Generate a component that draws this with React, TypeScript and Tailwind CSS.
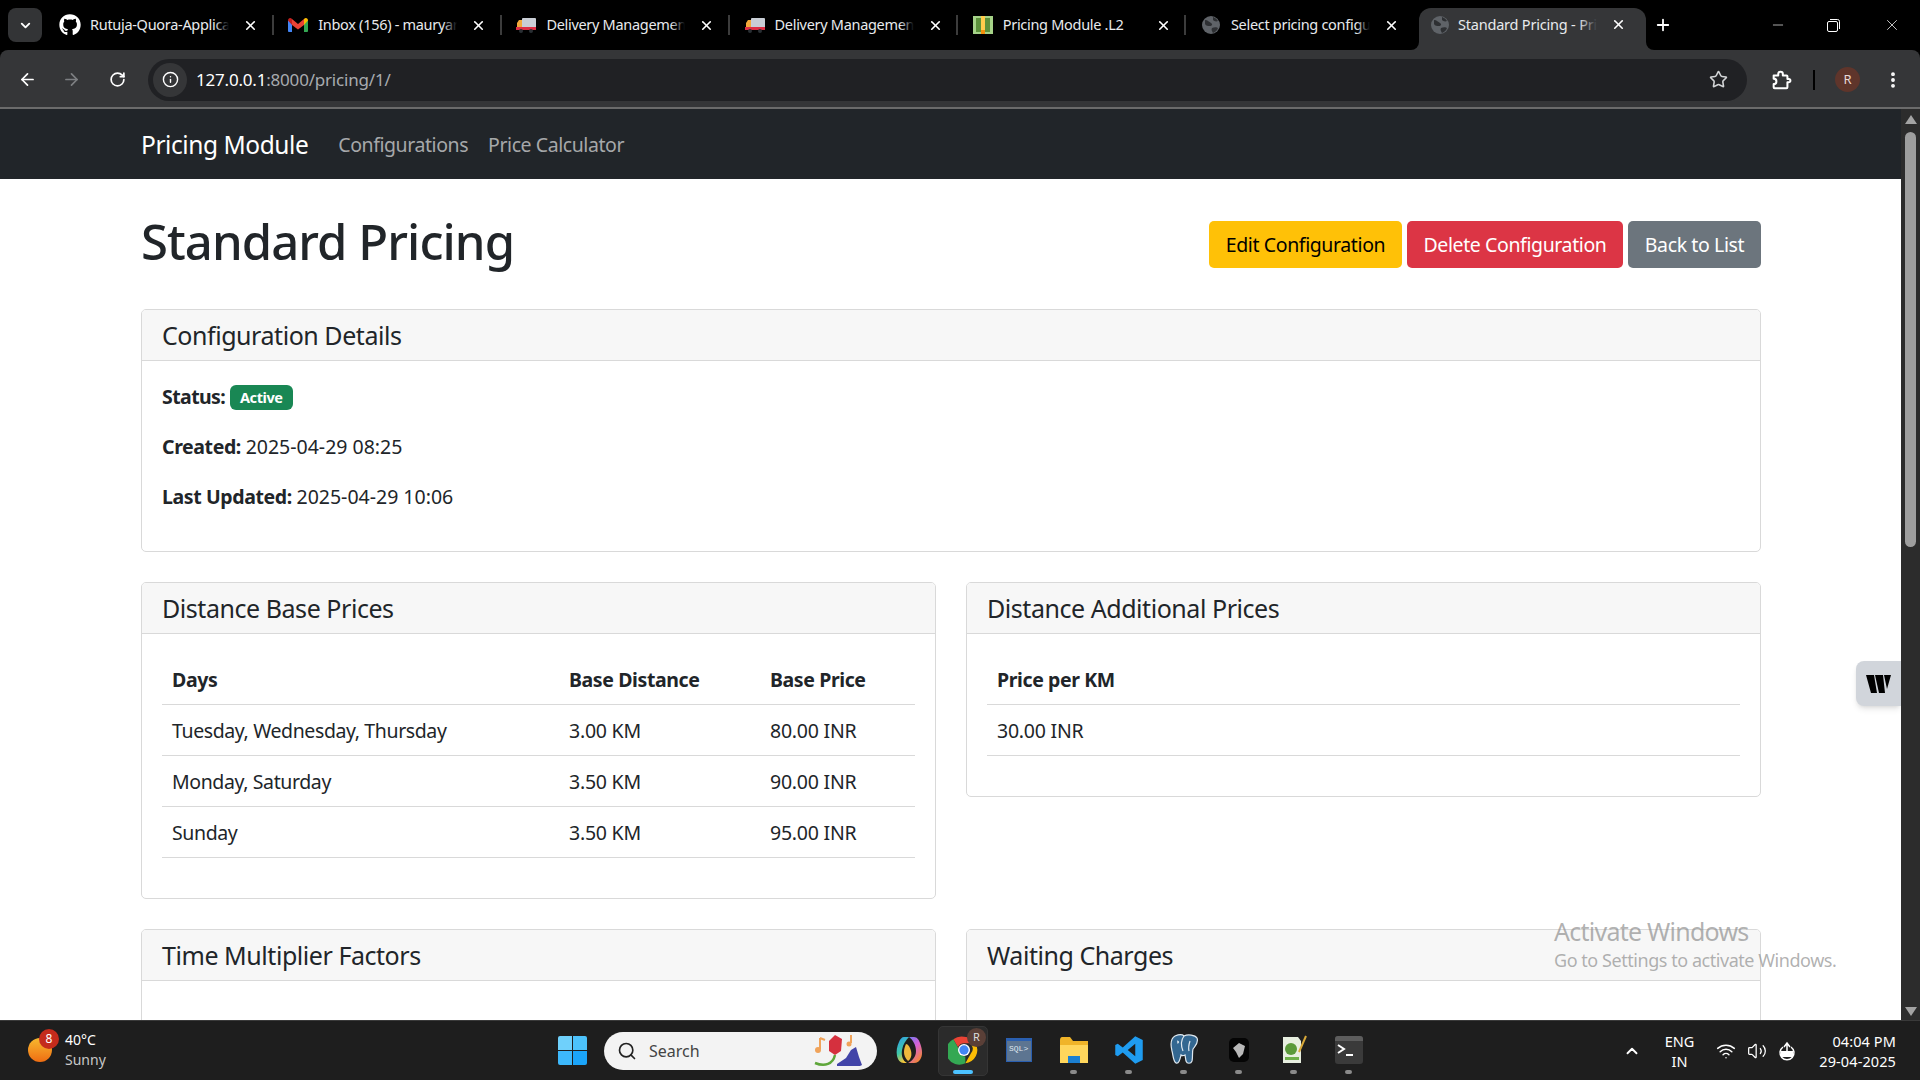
import React from "react";
import { ChevronDown, X, ArrowLeft, ArrowRight, RotateCw, Info, Star, EllipsisVertical, Plus, Minus, Search, ChevronUp, Wifi, Volume2 } from "lucide-react";
import { FaGithub } from "react-icons/fa";

const font = "font-['Noto_Sans','Open_Sans',sans-serif]";

function Truck() {
  return (
    <svg width="20" height="18" viewBox="0 0 20 18">
      <rect x="6" y="2" width="14" height="10" rx="1" fill="#c9ced6" />
      <path d="M1 7l2-3h3v8H1z" fill="#f2a93b" />
      <rect x="0" y="11" width="20" height="3" fill="#dd2e44" />
      <circle cx="5" cy="15" r="2" fill="#292f33" />
      <circle cx="15" cy="15" r="2" fill="#292f33" />
    </svg>
  );
}
function Money() {
  return (
    <svg width="20" height="20" viewBox="0 0 20 20">
      <rect x="0" y="1" width="20" height="18" fill="#a6d388" />
      <rect x="3" y="3" width="14" height="14" fill="#5c913b" />
      <rect x="8" y="1" width="4" height="18" fill="#ffcc4d" />
      <rect x="8" y="15" width="4" height="4" fill="#f4900c" />
    </svg>
  );
}
function Globe() {
  return (
    <svg width="18" height="18" viewBox="0 0 18 18" className="shrink-0">
      <circle cx="9" cy="9" r="9" fill="#5f6368" />
      <path d="M3 4c3 0 4 2 6 3s1 3-1 3-4 0-5-2zM11 1c2 1 3 1 5 4-2 1-4 0-5-1zM10 12c2-1 5-1 6 0-1 3-3 4-5 5-1-2-2-3-1-5z" fill="#2e3033" />
    </svg>
  );
}
function Gmail() {
  return (
    <svg width="20" height="16" viewBox="0 0 20 16">
      <path d="M0 3v11c0 .8.6 1 1 1h3V7z" fill="#4285f4" />
      <path d="M20 3v11c0 .8-.6 1-1 1h-3V7z" fill="#34a853" />
      <path d="M4 8V2l6 5 6-5v6l-6 4.500z" fill="#ea4335" />
      <path d="M0 3.500C0 1 2.500 0 4 2v6z" fill="#c5221f" />
      <path d="M20 3.500C20 1 17.500 0 16 2v6z" fill="#fbbc04" />
    </svg>
  );
}

function Tab({ icon, title }: { icon: React.ReactNode; title: string }) {
  return (
    <div className="flex h-[34px] w-[199px] shrink-0 items-center">
      <div className="flex w-[22px] shrink-0 justify-center">{icon}</div>
      <div className="relative ml-[9px] flex-1 overflow-hidden whitespace-nowrap text-[14.500px] tracking-[-0.3px] text-[#e8eaed]">
        {title}
        <div className="absolute top-0 right-0 h-full w-[14px] bg-gradient-to-r from-transparent to-black" />
      </div>
      <X size={15} strokeWidth={2.6} className="ml-[14px] shrink-0 text-white" />
    </div>
  );
}
function Sep() {
  return <div className="mx-[13.600px] h-[20px] w-[2px] shrink-0 bg-[#3c3c3c]" />;
}

function Tabs() {
  return (
    <div className="flex h-[50px] shrink-0 items-center bg-black pl-[8px]">
      <div className="flex h-[34px] w-[34px] shrink-0 items-center justify-center rounded-[8px] bg-[#333436]">
        <ChevronDown size={15} strokeWidth={3} className="text-white" />
      </div>
      <div className="ml-[17px] flex items-center">
        <Tab icon={<FaGithub size={22} className="text-white" />} title="Rutuja-Quora-Application" />
        <Sep />
        <Tab icon={<Gmail />} title="Inbox (156) - mauryarutuja" />
        <Sep />
        <Tab icon={<Truck />} title="Delivery Management System" />
        <Sep />
        <Tab icon={<Truck />} title="Delivery Management System" />
        <Sep />
        <Tab icon={<Money />} title="Pricing Module .L2" />
        <Sep />
        <Tab icon={<Globe />} title="Select pricing configuration" />
      </div>
      <div className="relative ml-[20px] flex h-[42px] w-[227px] shrink-0 items-center self-end rounded-t-[12px] bg-[#353638] pr-[20px] pb-[9px] pl-[12px]">
        <div className="absolute bottom-0 -left-[8px] h-[8px] w-[8px] bg-[#353638]">
          <div className="h-full w-full rounded-br-[8px] bg-black" />
        </div>
        <div className="absolute -right-[8px] bottom-0 h-[8px] w-[8px] bg-[#353638]">
          <div className="h-full w-full rounded-bl-[8px] bg-black" />
        </div>
        <Globe />
        <div className="relative ml-[9px] flex-1 overflow-hidden whitespace-nowrap text-[14.500px] tracking-[-0.2px] text-[#e8eaed]">
          Standard Pricing - Pricing
          <div className="absolute top-0 right-0 h-full w-[18px] bg-gradient-to-r from-transparent to-[#353638]" />
        </div>
        <X size={15} strokeWidth={2.6} className="ml-[14px] shrink-0 text-white" />
      </div>
      <Plus size={18} strokeWidth={2.4} className="ml-[8px] shrink-0 text-white" />
      <div className="flex-1" />
      <Minus size={16} strokeWidth={1} className="mr-[41px] text-white" />
      <svg width="13" height="13" viewBox="0 0 13 13" className="mr-[43px] text-white" fill="none" stroke="currentColor">
        <rect x="0.500" y="2.500" width="10" height="10" rx="1.500" />
        <path d="M3 .500h7.500a2 2 0 0 1 2 2V10" />
      </svg>
      <X size={18} strokeWidth={1} className="mr-[19px] text-white" />
    </div>
  );
}

function Toolbar() {
  return (
    <div className="flex h-[57px] shrink-0 items-center rounded-t-[8px] bg-[#353638] pt-[2px] pl-[18px]">
      <ArrowLeft size={19} strokeWidth={2.2} className="text-white" />
      <ArrowRight size={19} strokeWidth={2.2} className="ml-[25px] text-[#7d7f82]" />
      <RotateCw size={17} strokeWidth={2.4} className="ml-[28px] text-white" />
      <div className="ml-[22px] flex h-[42px] flex-1 items-center rounded-full bg-[#202124] pl-[5px]">
        <div className="flex h-[34px] w-[34px] items-center justify-center rounded-full bg-[#353638]">
          <Info size={17} strokeWidth={2} className="text-white" />
        </div>
        <span className="ml-[9px] text-[17px] tracking-[-0.2px] text-white">
          127.0.0.1<span className="text-[#a8abaf]">:8000/pricing/1/</span>
        </span>
        <div className="flex-1" />
        <Star size={19} strokeWidth={2} className="mr-[19px] text-[#d2d4d6]" />
      </div>
      <svg width="22" height="22" viewBox="0 0 24 24" className="ml-[23px]" fill="none" stroke="#fff" strokeWidth="2.200" strokeLinejoin="round">
        <path d="M4 7h5V5.500a2.500 2.500 0 0 1 5 0V7h4a1 1 0 0 1 1 1v3h1.500a1.500 1.500 0 0 1 0 3.500H19V20a1 1 0 0 1-1 1H5a1 1 0 0 1-1-1v-3.500a3 3 0 0 0 0-6z" />
      </svg>
      <div className="ml-[21px] h-[20px] w-[2px] bg-black" />
      <div className="ml-[20px] flex h-[25px] w-[25px] items-center justify-center rounded-full bg-[#5f352b] text-[13px] text-[#e8d8d4]">R</div>
      <EllipsisVertical size={20} strokeWidth={2.6} className="mr-[17px] ml-[23px] text-white" />
    </div>
  );
}

function Card({ title, children, className = "" }: { title: string; children: React.ReactNode; className?: string }) {
  return (
    <div className={`overflow-hidden rounded-[5px] border border-[#d9d9d9] bg-white ${className}`}>
      <div className="flex h-[51px] items-center border-b border-[#d9d9d9] bg-[#f7f7f7] px-[20px] text-[25px] leading-[30px] tracking-[-0.018em] text-[#212529]">
        {title}
      </div>
      {children}
    </div>
  );
}

const th = "h-[50.800px] border-b border-[#d9d9d9] px-[10px] pt-[2px] text-left font-bold";
const thCut = "h-[50.800px] border-b border-[#d9d9d9] px-[10px] pt-[4px] text-left font-bold";
const td = "h-[50.800px] border-b border-[#d9d9d9] px-[10px] pt-[2px] text-left font-normal tracking-[-0.012em]";
const td1 = "h-[50.800px] border-b border-[#d9d9d9] px-[10px] pt-[2px] text-left font-normal";

function Page() {
  return (
    <div className="relative min-w-0 flex-1 overflow-hidden bg-white">
      <div className="flex h-[70px] items-center bg-[#212529] pt-[2px] pl-[141px] tracking-[-0.027em]">
        <span className="text-[24.500px] text-white">Pricing Module</span>
        <span className="ml-[30px] text-[19.500px] text-[#a6a8aa]">Configurations</span>
        <span className="ml-[20px] text-[19.500px] text-[#a6a8aa]">Price Calculator</span>
      </div>
      <div className="pr-[140px] pl-[141px] text-[19.500px] leading-[30px] tracking-[-0.02em] text-[#212529]">
        <div className="flex items-center justify-between pt-[32px] pb-[38px]">
          <h1 className="text-[49px] leading-[60px] font-medium tracking-[-0.019em]">Standard Pricing</h1>
          <div className="flex gap-[5px] pt-[6px]">
            <button className="h-[47px] w-[193px] rounded-[5px] bg-[#ffc107] pt-[2px] text-black">Edit Configuration</button>
            <button className="h-[47px] w-[216px] rounded-[5px] bg-[#dc3545] pt-[2px] text-white">Delete Configuration</button>
            <button className="h-[47px] w-[133px] rounded-[5px] bg-[#6c757d] pt-[2px] text-white">Back to List</button>
          </div>
        </div>
        <Card title="Configuration Details" className="h-[243px]">
          <div className="flex flex-col gap-[20px] px-[20px] pt-[21px]">
            <p><b className="tracking-[-0.03em]">Status:</b> <span className="inline-block rounded-[6px] bg-[#198754] px-[10px] py-[4px] align-[1px] text-[14.500px] leading-[17px] font-bold text-white">Active</span></p>
            <p><b>Created:</b> <span className="tracking-normal">2025-04-29 08:25</span></p>
            <p><b>Last Updated:</b> <span className="tracking-normal">2025-04-29 10:06</span></p>
          </div>
        </Card>
        <div className="mt-[30px] grid grid-cols-2 items-start gap-[30px]">
          <Card title="Distance Base Prices" className="h-[317px]">
            <div className="p-[20px]">
              <table className="w-full table-fixed border-collapse">
                <colgroup><col className="w-[397px]" /><col className="w-[201px]" /><col /></colgroup>
                <thead><tr><th className={th}>Days</th><th className={th}>Base Distance</th><th className={th}>Base Price</th></tr></thead>
                <tbody>
                  <tr><td className={td1}>Tuesday, Wednesday, Thursday</td><td className={td}>3.00 KM</td><td className={td}>80.00 INR</td></tr>
                  <tr><td className={td1}>Monday, Saturday</td><td className={td}>3.50 KM</td><td className={td}>90.00 INR</td></tr>
                  <tr><td className={td1}>Sunday</td><td className={td}>3.50 KM</td><td className={td}>95.00 INR</td></tr>
                </tbody>
              </table>
            </div>
          </Card>
          <Card title="Distance Additional Prices" className="h-[215px]">
            <div className="p-[20px]">
              <table className="w-full border-collapse">
                <thead><tr><th className={th}>Price per KM</th></tr></thead>
                <tbody><tr><td className={td}>30.00 INR</td></tr></tbody>
              </table>
            </div>
          </Card>
          <Card title="Time Multiplier Factors" className="h-[300px]">
            <div className="p-[20px]">
              <table className="w-full table-fixed border-collapse">
                <colgroup><col className="w-[451px]" /><col /></colgroup>
                <thead><tr><th className={thCut}>Time Threshold</th><th className={thCut}>Multiplier</th></tr></thead>
              </table>
            </div>
          </Card>
          <Card title="Waiting Charges" className="h-[300px]">
            <div className="p-[20px]">
              <table className="w-full table-fixed border-collapse">
                <colgroup><col className="w-[268px]" /><col className="w-[160px]" /><col className="w-[205px]" /><col /></colgroup>
                <thead><tr><th className={thCut}>Initial Wait Time</th><th className={thCut}>Price</th><th className={thCut}>Wait</th><th className={thCut}>Wait</th></tr></thead>
              </table>
            </div>
          </Card>
        </div>
      </div>
      <div className="absolute top-[552px] right-0 flex h-[45px] w-[45px] items-center justify-center rounded-l-[8px] bg-[#d1d5db] shadow-md">
        <svg width="25" height="18" viewBox="0 0 25 18" fill="#000">
          <path d="M0 0h8l3 18H5zM9 0h8l2 18h-6zM18 0h7l-4 14z" />
        </svg>
      </div>
    </div>
  );
}

function Scrollbar() {
  return (
    <div className="flex w-[19px] shrink-0 flex-col items-center bg-[#2c2c2c] pt-[6px]">
      <div className="h-0 w-0 border-x-[6px] border-b-[9px] border-x-transparent border-b-[#a3a3a3]" />
      <div className="mt-[8px] h-[415px] w-[11px] rounded-full bg-[#9e9e9e]" />
      <div className="flex-1" />
      <div className="mb-[4px] h-0 w-0 border-x-[6px] border-t-[9px] border-x-transparent border-t-[#a3a3a3]" />
    </div>
  );
}

function Slot({ children, dot = true }: { children: React.ReactNode; dot?: boolean }) {
  return (
    <div className="relative flex h-[59px] w-[55px] shrink-0 items-center justify-center pb-[2px]">
      {children}
      {dot && <div className="absolute top-[49px] left-[24px] h-[4px] w-[7px] rounded-full bg-[#8a8a8a]" />}
    </div>
  );
}

function Taskbar() {
  return (
    <div className="relative flex h-[60px] shrink-0 items-center justify-between border-t border-[#3a3a3a] bg-[#1e1e1e] text-white">
      <div className="flex items-center pb-[2px] pl-[28px]">
        <div className="relative h-[24px] w-[24px]">
          <div className="absolute inset-0 rounded-full bg-gradient-to-b from-[#f5b82e] to-[#ee6c12]" />
          <div className="absolute -top-[9px] left-[11px] flex h-[20px] w-[20px] items-center justify-center rounded-full bg-[#c42b1c] text-[12px]">8</div>
        </div>
        <div className="ml-[13px] text-[14px] leading-[20px]">
          <div>40°C</div>
          <div className="text-[#c8c8c8]">Sunny</div>
        </div>
      </div>
      <div className="absolute top-0 left-[558px] flex h-[59px] items-center">
        <div className="grid h-[29px] w-[29px] grid-cols-2 gap-[1px]">
          <div className="rounded-tl-[2px] bg-[#6fd0fb]" /><div className="rounded-tr-[2px] bg-[#4cc2fb]" />
          <div className="rounded-bl-[2px] bg-[#3db8fb]" /><div className="rounded-br-[2px] bg-[#1ba5fa]" />
        </div>
        <div className="ml-[17px] flex h-[38px] w-[273px] shrink-0 items-center rounded-full bg-[#f3f3f3] pl-[13px] text-[#444]">
          <Search size={20} strokeWidth={2} className="text-[#222]" />
          <span className="ml-[12px] text-[16px]">Search</span>
          <div className="flex-1" />
          <svg width="54" height="36" viewBox="0 0 54 36" className="mr-[10px]">
            <path d="M2 30c10 4 18 1 20-8" fill="none" stroke="#5ea63a" strokeWidth="2.500" />
            <path d="M16 8l6-6 7 4-1 12-6 4-6-4z" fill="#d5303e" />
            <path d="M24 31l9-6 5-8 5-3 3 10 3 8-2 1H24z" fill="#4244a8" />
            <path d="M7 5v11M7 5l5 2" stroke="#f0a35a" strokeWidth="2" fill="none" />
            <circle cx="5" cy="17" r="3" fill="#f0a35a" />
            <path d="M38 2v8" stroke="#f0a35a" strokeWidth="2" />
            <circle cx="36" cy="11" r="2.500" fill="#f0a35a" />
          </svg>
        </div>
        <div className="ml-[4px] flex">
          <Slot dot={false}>
            <svg width="30" height="30" viewBox="0 0 30 30">
              <defs>
                <linearGradient id="copA" x1="0" y1="0" x2="0.4" y2="1"><stop offset="0" stopColor="#2f9bf0" /><stop offset=".6" stopColor="#3fc8a8" /><stop offset="1" stopColor="#f3c63c" /></linearGradient>
                <linearGradient id="copB" x1="0" y1="0" x2="0.6" y2="1"><stop offset="0" stopColor="#6a7cf0" /><stop offset=".5" stopColor="#d85fd8" /><stop offset="1" stopColor="#f0843c" /></linearGradient>
              </defs>
              <path d="M10 2h5c-3 3-6 7-7 13s1 11 5 13h-3c-4 0-6-3-7-7-1-5 0-10 2-14 1-3 3-5 5-5z" fill="url(#copA)" />
              <path d="M15 2h5c3 0 5 3 6 6 2 5 3 11 1 15-1 3-4 5-7 5h-6c4-2 8-6 8-12 0-6-3-11-7-14z" fill="url(#copB)" />
              <path d="M12 9c2 0 4 3 5 7s0 8-3 10c-3-3-4-6-4-9s1-6 2-8z" fill="#f0b93c" />
            </svg>
          </Slot>
          <Slot dot={false}>
            <div className="absolute top-[5px] left-[2px] h-[50px] w-[50px] rounded-[5px] border border-[#353535] bg-[#2b2b2b]" />
            <svg width="32" height="32" viewBox="0 0 48 48" className="relative">
              <path d="M24 4a20 20 0 0 1 17.300 10H24a10 10 0 0 0-9 5.800L8 8A20 20 0 0 1 24 4z" fill="#ea4335" />
              <path d="M41.300 14A20 20 0 0 1 26 44l8.500-15A10 10 0 0 0 33 14z" fill="#fbbc04" />
              <path d="M8 8l8.500 15A10 10 0 0 0 26 33.800L26 44A20 20 0 0 1 8 8z" fill="#34a853" />
              <circle cx="24" cy="24" r="9" fill="#fff" />
              <circle cx="24" cy="24" r="7" fill="#4285f4" />
            </svg>
            <div className="absolute top-[7px] right-[5px] flex h-[19px] w-[19px] items-center justify-center rounded-full bg-[#5a3f37] text-[11px] text-[#ddd]">R</div>
            <div className="absolute top-[49px] left-[17px] h-[4px] w-[20px] rounded-full bg-[#4cc2ff]" />
          </Slot>
          <Slot dot={false}>
            <svg width="28" height="28" viewBox="0 0 28 28">
              <rect width="26" height="24" y="2" x="1" fill="#2a5fb0" />
              <rect width="24" height="20" y="5" x="2" fill="#5d7591" />
              <text x="4" y="15" fontSize="8" fill="#dfe6ee" fontFamily="Liberation Mono">SQL&gt;</text>
            </svg>
          </Slot>
          <Slot>
            <svg width="30" height="28" viewBox="0 0 30 28">
              <path d="M1 4c0-2 1-3 2-3h8l3 4h15v21H1z" fill="#f0b429" />
              <path d="M1 9h28v18H1z" fill="#ffd65c" />
              <rect x="9" y="20" width="12" height="7" fill="#1b7fd1" />
            </svg>
          </Slot>
          <Slot>
            <svg width="30" height="30" viewBox="0 0 24 24">
              <path d="M17 1l6 3v16l-6 3L7 14l-4 3-2-1V8l2-1 4 3zM17 7l-6 5 6 5z" fill="#1f9cf0" />
            </svg>
          </Slot>
          <Slot>
            <svg width="30" height="32" viewBox="0 0 30 32">
              <path d="M6 2c5-2 8-1 9 0 4-2 11-1 13 2 2 5-2 8-4 11-1 3 0 8-1 12-1 3-5 3-6 0l-1-6c-2 1-3 1-4 0-1 4-2 9-5 8-3-2-3-9-4-12C2 13 1 5 6 2z" fill="#336791" stroke="#dfe8ef" strokeWidth="1.200" />
              <path d="M15 2c-3 4-3 10-1 15M21 7c-1 3-2 6-1 10M8 7c2 0 2 2 0 2" fill="none" stroke="#dfe8ef" strokeWidth="1.200" />
            </svg>
          </Slot>
          <Slot>
            <svg width="30" height="30" viewBox="0 0 30 30">
              <rect x="5" y="3" width="20" height="24" rx="5" fill="#050505" />
              <path d="M15 8l6 3-2 8-4 4-3-6-3-4z" fill="#b8b8b8" />
            </svg>
          </Slot>
          <Slot>
            <svg width="30" height="30" viewBox="0 0 30 30">
              <path d="M4 2h15l3 4v22H4z" fill="#e8efe0" />
              <circle cx="12" cy="14" r="6" fill="#5b9a3a" />
              <path d="M6 22h14v3H6z" fill="#6fb04a" />
              <path d="M27 1l-7 16" stroke="#d9a93a" strokeWidth="2" />
            </svg>
          </Slot>
          <Slot>
            <div className="h-[28px] w-[28px] rounded-[3px] bg-[#3a3a3a]">
              <div className="h-[5px] rounded-t-[3px] bg-[#5d5d5d]" />
              <svg width="28" height="22" viewBox="0 0 28 22">
                <path d="M3 4l6 4-6 4" fill="none" stroke="#fff" strokeWidth="2" />
                <path d="M11 14h7" stroke="#fff" strokeWidth="2" />
              </svg>
            </div>
          </Slot>
        </div>
      </div>
      <div className="flex items-center pr-[24px]">
        <ChevronUp size={18} strokeWidth={2.5} className="mr-[24px]" />
        <div className="mr-[22px] text-center text-[14.500px] leading-[20px]"><div>ENG</div><div>IN</div></div>
        <Wifi size={20} strokeWidth={1.8} className="mr-[11px]" />
        <Volume2 size={20} strokeWidth={1.5} className="mr-[10px]" />
        <svg width="20" height="20" viewBox="0 0 20 20" className="mr-[22px]" fill="none" stroke="#fff" strokeWidth="1.500">
          <path d="M6 6a7 7 0 1 0 8 0" />
          <path d="M10 2v8M7 6l3-4 3 4" />
          <rect x="4" y="10" width="12" height="6" fill="#fff" stroke="none" />
        </svg>
        <div className="text-right text-[14.500px] leading-[20px] tracking-[0.1px]"><div>04:04 PM</div><div>29-04-2025</div></div>
      </div>
    </div>
  );
}

export default function App() {
  return (
    <div className={`relative flex h-screen w-screen flex-col overflow-hidden bg-black ${font}`}>
      <Tabs />
      <Toolbar />
      <div className="h-[2px] shrink-0 bg-[#6b6b6b]" />
      <div className="flex min-h-0 flex-1">
        <Page />
        <Scrollbar />
      </div>
      <Taskbar />
      <div className="absolute top-[915px] left-[1554px] text-[#8f8f8f]/70">
        <div className="text-[25px] leading-[32px] tracking-[-0.03em]">Activate Windows</div>
        <div className="text-[18px] leading-[26px] tracking-[-0.025em]">Go to Settings to activate Windows.</div>
      </div>
    </div>
  );
}
